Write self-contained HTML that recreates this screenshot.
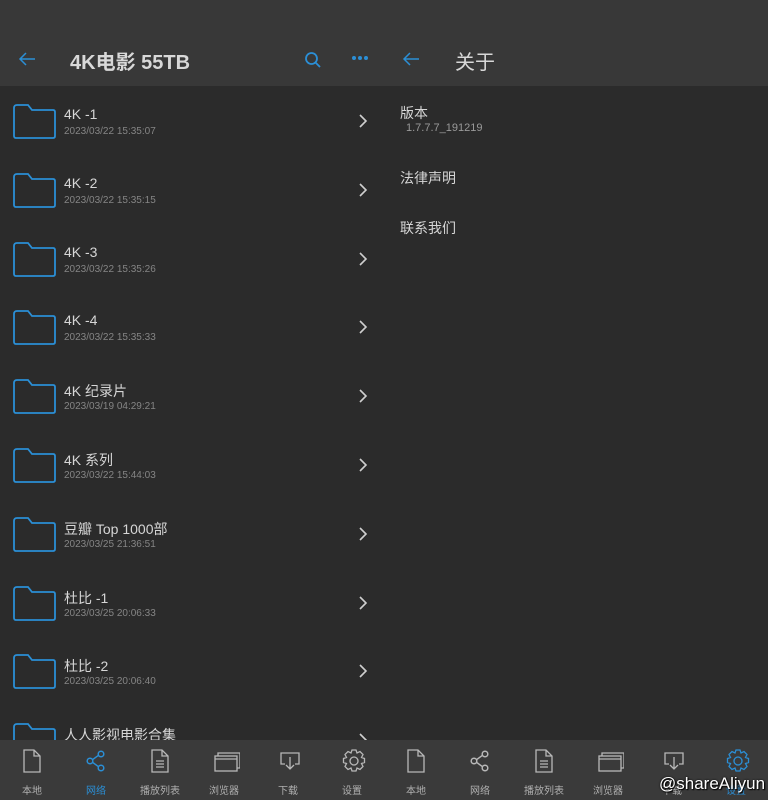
<!DOCTYPE html>
<html><head><meta charset="utf-8"><style>
*{margin:0;padding:0;box-sizing:border-box}
body{width:768px;height:800px;background:#2b2b2b;font-family:"Liberation Sans","Noto Sans CJK SC",sans-serif;position:relative;overflow:hidden}
.hdr{position:absolute;top:0;height:86px;background:#383838}
.title{position:absolute;top:46px;color:#d8d8d8;font-size:20px}
.row{position:absolute;left:0;width:384px;height:69px}
.row svg.f{position:absolute;left:12px;top:17px}
.row .n{position:absolute;left:64px;top:20px;color:#d6d6d6;font-size:14px}
.row .d{position:absolute;left:64px;top:40px;color:#858585;font-size:10px}
.row svg.c{position:absolute;left:357px;top:27px}
.bar{position:absolute;top:740px;height:60px;width:384px;background:#3a3a3a}
.it{position:absolute;top:0;width:64px;height:60px;text-align:center}
.it svg{position:absolute;left:20px;top:8px}
.it span{position:absolute;left:0;width:64px;top:42px;font-size:10px;color:#b0b0b0}
.ab{position:absolute;left:400px;color:#d6d6d6;font-size:14px}
</style></head><body>
<div class="hdr" style="left:0;width:768px"></div>
<svg style="position:absolute;left:18px;top:51px" width="18" height="16" viewBox="0 0 18 16"><path d="M17 8H2M8 2L2 8l6 6" stroke="#2b8fd6" stroke-width="1.5" fill="none"/></svg>
<div class="title" style="left:70px;font-weight:bold">4K电影 55TB</div>
<svg style="position:absolute;left:304px;top:51px" width="18" height="18" viewBox="0 0 18 18"><circle cx="7.5" cy="7.5" r="5.5" stroke="#2b8fd6" stroke-width="1.8" fill="none"/><path d="M11.5 11.5L16 16" stroke="#2b8fd6" stroke-width="1.8"/></svg>
<svg style="position:absolute;left:351px;top:55px" width="18" height="6"><circle cx="3" cy="3" r="2" fill="#2b8fd6"/><circle cx="9" cy="3" r="2" fill="#2b8fd6"/><circle cx="15" cy="3" r="2" fill="#2b8fd6"/></svg>
<svg style="position:absolute;left:402px;top:51px" width="18" height="16" viewBox="0 0 18 16"><path d="M17 8H2M8 2L2 8l6 6" stroke="#2b8fd6" stroke-width="1.5" fill="none"/></svg>
<div class="title" style="left:455px">关于</div>

<div id="list"></div>
<div class="ab" style="top:103px">版本</div>
<div class="ab" style="left:406px;top:122px;font-size:11px;color:#9a9a9a">1.7.7.7_191219</div>
<div class="ab" style="top:168px">法律声明</div>
<div class="ab" style="top:218px">联系我们</div>

<script>
var rows=[["4K -1","2023/03/22 15:35:07"],["4K -2","2023/03/22 15:35:15"],["4K -3","2023/03/22 15:35:26"],["4K -4","2023/03/22 15:35:33"],["4K 纪录片","2023/03/19 04:29:21"],["4K 系列","2023/03/22 15:44:03"],["豆瓣 Top 1000部","2023/03/25 21:36:51"],["杜比 -1","2023/03/25 20:06:33"],["杜比 -2","2023/03/25 20:06:40"],["人人影视电影合集",""]];
var h="";
rows.forEach(function(r,i){var t=86+i*68.8;
h+='<div class="row" style="top:'+t+'px"><svg class="f" width="45" height="37" viewBox="0 0 45 37"><path d="M2 5Q2 2 5 2H16L20 7H41Q43 7 43 9V33Q43 35 41 35H4Q2 35 2 33Z" stroke="#2b8fd6" stroke-width="1.8" fill="none"/></svg><div class="n">'+r[0]+'</div><div class="d">'+r[1]+'</div><svg class="c" width="12" height="16" viewBox="0 0 12 16"><path d="M3 2l6 6-6 6" stroke="#cfcfcf" stroke-width="1.6" fill="none"/></svg></div>';});
document.getElementById("list").innerHTML=h;
</script>

<div id="bars"></div>
<script>
var ic={
file:'<path d="M4 2h10l6 6v16H4z M14 2v6h6" stroke="C" stroke-width="1.3" fill="none"/>',
share:'<circle cx="17" cy="6" r="2.8" stroke="C" stroke-width="1.5" fill="none"/><circle cx="6" cy="13" r="2.8" stroke="C" stroke-width="1.5" fill="none"/><circle cx="17" cy="20" r="2.8" stroke="C" stroke-width="1.5" fill="none"/><path d="M8.5 11.7L14.5 7.3M8.5 14.3L14.5 18.7" stroke="C" stroke-width="1.5"/>',
list:'<path d="M4 2h10l6 6v16H4z M14 2v6h6 M8 13h8M8 16h8M8 19h8" stroke="C" stroke-width="1.3" fill="none"/>',
brow:'<rect x="3" y="8" width="22" height="15" stroke="C" stroke-width="1.3" fill="none"/><path d="M6 8V5h22v15h-3" stroke="C" stroke-width="1.3" fill="none"/><path d="M3 11h22" stroke="C" stroke-width="1.3"/>',
dl:'<path d="M9 16H5V5h18v11h-4M14 9v12M10 17l4 4 4-4" stroke="C" stroke-width="1.3" fill="none"/>',
set:'<circle cx="14" cy="13" r="4" stroke="C" stroke-width="1.3" fill="none"/><path d="M12 2h4l1 3 3-1.5 3 3-1.5 3 3 1v4l-3 1 1.5 3-3 3-3-1.5-1 3h-4l-1-3-3 1.5-3-3 1.5-3-3-1v-4l3-1-1.5-3 3-3 3 1.5z" stroke="C" stroke-width="1.3" fill="none"/>'};
var names=[["file","本地"],["share","网络"],["list","播放列表"],["brow","浏览器"],["dl","下载"],["set","设置"]];
var h="";
[0,384].forEach(function(x,p){h+='<div class="bar" style="left:'+x+'px">';
names.forEach(function(n,i){var act=(p==0&&i==1)||(p==1&&i==5);var c=act?"#2b8fd6":"#b8b8b8";
h+='<div class="it" style="left:'+i*64+'px"><svg width="28" height="28" viewBox="0 0 28 28">'+ic[n[0]].replace(/"C"/g,'"'+c+'"')+'</svg><span style="color:'+(act?"#2b8fd6":"#b0b0b0")+'">'+n[1]+'</span></div>';});
h+='</div>';});
document.getElementById("bars").innerHTML=h;
</script>
<div style="position:absolute;left:659px;top:774px;color:#fff;font-size:17px;text-shadow:0 0 2px #000,1px 1px 1px #000">@shareAliyun</div>
</body></html>
